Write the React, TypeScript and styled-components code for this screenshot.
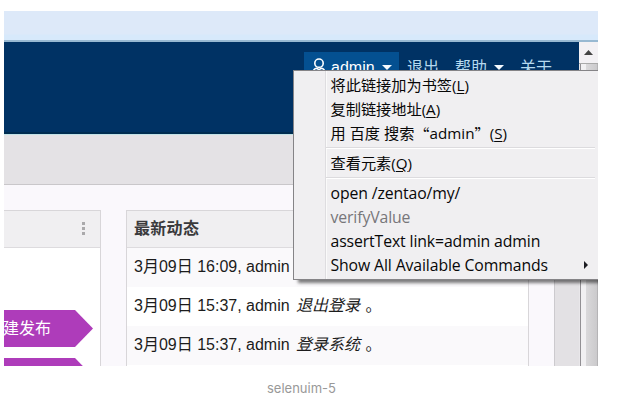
import React from 'react';
import styled, { createGlobalStyle } from 'styled-components';

const GlobalStyle = createGlobalStyle`
  * { box-sizing: border-box; }
  body { margin: 0; background: #fff; overflow: hidden; }
`;

const Figure = styled.figure`
  margin: 0;
  width: 633px;
  height: 408px;
  padding: 11px 0 0 4px;
  font-family: "Liberation Sans", "Noto Sans CJK SC", sans-serif;
`;

const Shot = styled.div`
  position: relative;
  width: 594px;
  height: 355px;
  overflow: hidden;
  display: flex;
  flex-direction: column;
`;

const TabStrip = styled.div`
  flex: none;
  height: 31px;
  background: linear-gradient(#dde9f9 0 23px, #d7e9fb 24px 29px, #98b9d2 29px);
`;

const Viewport = styled.div`
  display: flex;
  flex: 1;
  min-height: 0;
`;

const Page = styled.div`
  width: 575px;
  display: flex;
  flex-direction: column;
`;

const NavBar = styled.nav`
  flex: none;
  height: 93px;
  padding: 10px 27px 0 0;
  display: flex;
  justify-content: flex-end;
  background: linear-gradient(#003264 0 90px, #002c50 90px 92px, #c3e3e7 92px);
`;

const NavLink = styled.a<{ $active?: boolean; $width: number }>`
  width: ${p => p.$width}px;
  height: 31px;
  padding-left: 8px;
  display: flex;
  align-items: center;
  white-space: nowrap;
  font-size: 16px;
  line-height: 31px;
  color: ${p => (p.$active ? '#fff' : '#b5d9ef')};
  background: ${p => (p.$active ? '#045091' : 'transparent')};
`;

const UserIcon = styled.svg`
  width: 14px;
  height: 18px;
  margin: -2px 5px 0 0;
  flex: none;
`;

const Caret = styled.i`
  margin: 0 0 0 7px;
  border: 5px solid transparent;
  border-top-color: #f4faff;
  border-bottom: 0;
`;

const SubBar = styled.div`
  flex: none;
  height: 50px;
  background: #e4e2e5;
  border-bottom: 1px solid #c9c7ca;
`;

const Content = styled.main`
  flex: 1;
  display: flex;
  align-items: stretch;
  min-height: 0;
`;

const Board = styled.div`
  width: 550px;
  padding-top: 25px;
  display: flex;
  gap: 25px;
  background: #faf8fc;
`;

const Gutter = styled.div`
  flex: 1;
  background: #e3e1e4;
  border-left: 1px solid #cccace;
`;

const Panel = styled.section<{ $width: number; $open?: boolean }>`
  width: ${p => p.$width}px;
  flex: none;
  border: 1px solid #d8d6d9;
  border-bottom: 0;
  ${p => p.$open && 'border-left: 0;'}
  background: #fff;
`;

const PanelHead = styled.header`
  height: 37px;
  padding: 0 15px 4px 7px;
  display: flex;
  align-items: center;
  background: #f0eff1;
  border-bottom: 1px solid #dddbde;
  color: #3a3a3c;
  font-size: 16px;
  font-weight: 700;
  letter-spacing: 0.3px;
`;

const Dots = styled.span`
  margin: 3px 0 0 auto;
  display: grid;
  gap: 2px;
  i { width: 3px; height: 3px; background: #aaa9ab; }
`;

const Actions = styled.div`
  padding-top: 62px;
  display: grid;
  gap: 11px;
`;

const ArrowButton = styled.div`
  width: 89px;
  height: 37px;
  background: #ae3cba;
  clip-path: polygon(0 0, 71px 0, 100% 50%, 71px 100%, 0 100%);
  color: #fff;
  font-size: 16px;
  line-height: 37px;
  white-space: nowrap;
  text-indent: -1px;
`;

const Activity = styled.div`
  height: 39px;
  padding-left: 7px;
  font-size: 16px;
  line-height: 38px;
  white-space: pre;
  color: #1c1c1c;
  &:nth-child(even) { background: #faf9fb; }
  em { margin: 0 1px 0 2px; }
`;

const ScrollBar = styled.div`
  width: 19px;
  background: linear-gradient(90deg, #e9e7ea 0 1px, #929094 1px 2px, #f1f0f2 2px 7px, #dad9db 7px, #cbcacc 18px, #b5b4b6 18px);
`;

const ScrollUp = styled.div`
  height: 22px;
  display: flex;
  align-items: center;
  justify-content: center;
  background: #f3f1f4;
  border-bottom: 1px solid #aaa;
  svg { width: 9px; height: 5px; }
`;

const Menu = styled.div`
  position: absolute;
  left: 289px;
  top: 59px;
  width: 315px;
  height: 210px;
  padding: 2px 0 0 3px;
  background: linear-gradient(90deg, transparent 31px, #dedde0 31px 32px, #fafafa 32px 33px, transparent 33px), #f0eff1;
  border: 1px solid #858487;
  box-shadow: 5px 3px 3px rgba(0, 0, 0, 0.5);
  font-family: "Open Sans", "Noto Sans CJK SC", sans-serif;
`;

const MenuItem = styled.div<{ $muted?: boolean; $command?: boolean }>`
  height: 24px;
  padding-left: 33.5px;
  display: flex;
  align-items: center;
  white-space: pre;
  font-size: ${p => (p.$command ? 15.8 : 15.2)}px;
  line-height: 24px;
  letter-spacing: ${p => (p.$command ? -0.12 : 0)}px;
  color: ${p => (p.$muted ? '#77767a' : '#080808')};
  u { text-underline-offset: 2px; text-decoration-thickness: 1px; }
`;

const Quote = styled.span`
  font-family: "Noto Sans CJK SC", sans-serif;
`;

const Separator = styled.hr`
  height: 2px;
  margin: 2px 1px 2px 29px;
  width: 269px;
  border: 0;
  border-top: 1px solid #dcdbde;
  background: #fff;
`;

const SubArrow = styled.i`
  margin-left: auto;
  margin-right: 19px;
  border: 4px solid transparent;
  border-left-color: #1c1c22;
  border-right: 0;
`;

const Caption = styled.figcaption`
  margin-top: 12px;
  padding-left: 263px;
  font: 13px/20px Inter, sans-serif;
  color: #999;
`;

export default function App() {
  return (
    <Figure lang="zh-CN">
      <GlobalStyle />
      <Shot>
        <TabStrip />
        <Viewport>
          <Page>
            <NavBar>
              <NavLink $active $width={95}>
                <UserIcon viewBox="0 0 14 18" fill="none" stroke="#fff" strokeWidth="1.6">
                  <circle cx="7" cy="5.2" r="4.2" />
                  <path d="M1 16c0-3 .7-5 2.7-5.6C5.2 10 6 10.8 7 12c1-1.2 1.8-2 3.3-1.6C12.3 11 13 13 13 16Z" />
                </UserIcon>
                admin
                <Caret />
              </NavLink>
              <NavLink $width={48}>退出</NavLink>
              <NavLink $width={65}>帮助<Caret /></NavLink>
              <NavLink $width={40}>关于</NavLink>
            </NavBar>
            <SubBar />
            <Content>
              <Board>
                <Panel $width={97} $open>
                  <PanelHead><Dots><i /><i /><i /></Dots></PanelHead>
                  <Actions>
                    <ArrowButton>建发布</ArrowButton>
                    <ArrowButton />
                  </Actions>
                </Panel>
                <Panel $width={403}>
                  <PanelHead>最新动态</PanelHead>
                  <Activity>3月09日 16:09, admin</Activity>
                  <Activity>3月09日 15:37, admin <em>退出登录</em> 。</Activity>
                  <Activity>3月09日 15:37, admin <em>登录系统</em> 。</Activity>
                </Panel>
              </Board>
              <Gutter />
            </Content>
          </Page>
          <ScrollBar>
            <ScrollUp>
              <svg viewBox="0 0 9 5"><path d="M0 5 4.5 0 9 5Z" fill="#444" /></svg>
            </ScrollUp>
          </ScrollBar>
        </Viewport>
        <Menu>
          <MenuItem>将此链接加为书签(<u>L</u>)</MenuItem>
          <MenuItem>复制链接地址(<u>A</u>)</MenuItem>
          <MenuItem>用 百度 搜索<Quote>“</Quote>admin<Quote>”</Quote>(<u>S</u>)</MenuItem>
          <Separator />
          <MenuItem>查看元素(<u>Q</u>)</MenuItem>
          <Separator />
          <MenuItem $command>open /zentao/my/</MenuItem>
          <MenuItem $command $muted>verifyValue</MenuItem>
          <MenuItem $command>assertText link=admin admin</MenuItem>
          <MenuItem $command>Show All Available Commands<SubArrow /></MenuItem>
        </Menu>
      </Shot>
      <Caption>selenuim-5</Caption>
    </Figure>
  );
}
